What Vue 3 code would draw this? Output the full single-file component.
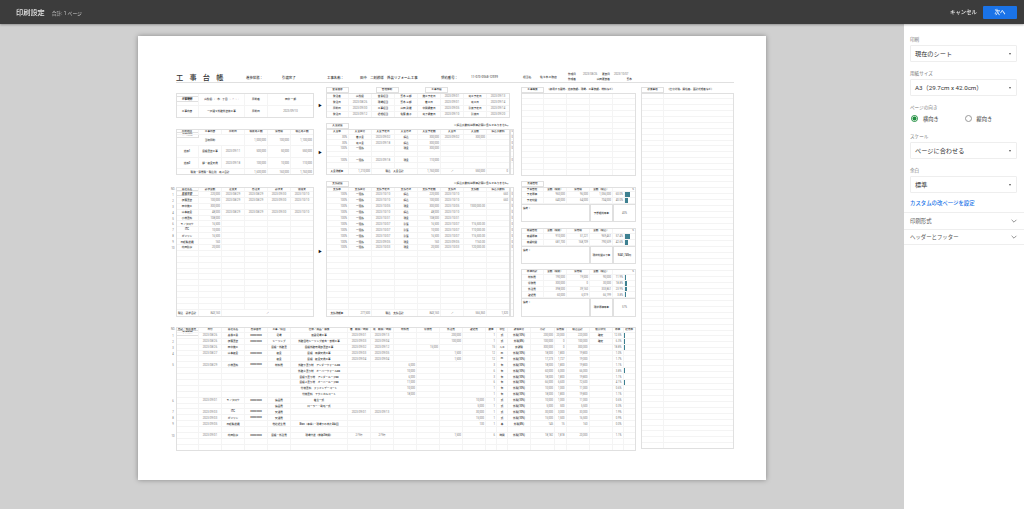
<template>
  <div class="app">
    <header class="topbar">
      <span class="top-title">印刷設定</span>
      <span class="top-count">合計: 1 ページ</span>
      <span class="top-cancel">キャンセル</span>
      <button class="top-next">次へ</button>
    </header>

    <div class="main">
      <div class="preview">
        <div class="sheet">
          <div class="sheet-head">
            <span class="doc-title">工事台帳</span>
            <span class="hd w-status">進捗状態：</span>
            <span class="hd w-done">引渡完了</span>
            <span class="hd w-name">工事名称：</span>
            <span class="hd w-site">田中　二刻模様　外装リフォーム工事</span>
            <span class="hd w-no">契約番号：</span>
            <span class="hd w-num">11-073-0568-12599</span>
            <span class="hd-sm w-owner">担当名</span>
            <span class="hd-sm w-shop">佐々木工務店</span>
            <div class="stamp">
              <span class="j">作成日</span><span>2023/08/26</span><span class="j">更新日</span><span>2023/10/07</span>
              <span class="j">作成者</span><span class="j e">山田</span><span class="j">更新者</span><span class="j e">鈴木</span>
            </div>
          </div>

          <div class="sheet-body">
            <div class="col-main">
              <div class="upper">
                <div class="sections">
                  <section v-for="s in sections" :key="s.id" class="section" :class="s.id">
                    <div class="tagrow">
                      <div class="tag-left"><span class="tag">{{ s.leftTag }}</span></div>
                      <div class="tag-right">
                        <span v-for="t in s.rightTags" :key="t" class="tag tag-gap">{{ t }}</span>
                        <span v-if="s.note" class="fee-note">※振込手数料は原価計算に含んでおりません。</span>
                      </div>
                    </div>
                    <div class="tblrow">
                      <template v-for="(p, i) in s.parts" :key="i">
                        <div v-if="p === 'arrow'" class="arrow">▶</div>
                        <div v-else class="tbl" :class="p.cls" :style="{ gridTemplateColumns: p.cols, gridTemplateRows: p.heights }">
                          <span v-for="(c, k) in p.cells" :key="k" class="cell" :class="c.cls" :style="c.span ? { gridColumn: 'span ' + c.span } : null">
                            <i v-if="c.bar" class="bar" :style="{ width: c.bar + '%' }"></i>
                            <template v-else>{{ c.t }}</template>
                          </span>
                        </div>
                      </template>
                    </div>
                  </section>
                </div>

                <div class="side">
                  <div class="tagline"><span class="tag">工事概要</span><span class="tag-note">（使用する建材、追加依頼、現場、工事依頼、材料など）</span></div>
                  <div class="tbl" :style="{ gridTemplateColumns: overview.cols, gridTemplateRows: overview.heights }">
                    <span v-for="(c, k) in overview.cells" :key="k" class="cell"></span>
                  </div>

                  <div v-for="p in panels" :key="p.id" class="panel" :class="p.id">
                    <div v-if="p.tag" class="tagline"><span class="tag">{{ p.tag }}</span></div>
                    <div class="tbl" :style="{ gridTemplateColumns: p.tbl.cols, gridTemplateRows: p.tbl.heights }">
                      <span v-for="(c, k) in p.tbl.cells" :key="k" class="cell" :class="c.cls" :style="c.span ? { gridColumn: 'span ' + c.span } : null">
                        <i v-if="c.bar" class="bar" :style="{ width: c.bar + '%' }"></i>
                        <template v-else>{{ c.t }}</template>
                      </span>
                    </div>
                  </div>
                </div>
              </div>

              <section class="section s4">
                <div class="tagrow">
                  <div class="tag-left"><span class="tag">原価明細</span></div>
                </div>
                <div class="tblrow">
                  <div class="tbl plain" :style="{ gridTemplateColumns: '6px', gridTemplateRows: detailHeights }">
                    <span v-for="(c, k) in detailNos.cells" :key="k" class="cell" :class="c.cls">{{ c.t }}</span>
                  </div>
                  <div class="tbl" :style="{ gridTemplateColumns: detail.cols, gridTemplateRows: detail.heights }">
                    <span v-for="(c, k) in detail.cells" :key="k" class="cell" :class="c.cls">
                      <i v-if="c.bar" class="bar" :style="{ width: c.bar + '%' }"></i>
                      <template v-else>{{ c.t }}</template>
                    </span>
                  </div>
                </div>
              </section>
            </div>

            <div class="col-notes">
              <div class="tagline"><span class="tag">必要事項</span><span class="tag-note">（仕分対策、開校者、面計処理者など）</span></div>
              <div class="tbl" :style="{ gridTemplateColumns: notes.cols, gridTemplateRows: notes.heights }">
                <span v-for="(c, k) in notes.cells" :key="k" class="cell"></span>
              </div>
            </div>
          </div>
        </div>
      </div>

      <aside class="panel-right">
        <div class="form">
          <template v-for="f in fieldsTop" :key="f.label">
            <label class="f-label">{{ f.label }}</label>
            <div class="select"><span>{{ f.value }}</span><i class="caret"></i></div>
          </template>

          <label class="f-label">ページの向き</label>
          <div class="radios">
            <span class="radio"><i class="dot on"></i>横向き</span>
            <span class="radio"><i class="dot"></i>縦向き</span>
          </div>

          <template v-for="f in fieldsBottom" :key="f.label">
            <label class="f-label">{{ f.label }}</label>
            <div class="select"><span>{{ f.value }}</span><i class="caret"></i></div>
          </template>

          <a class="custom-link">カスタムの改ページを設定</a>
        </div>

        <div v-for="a in accordions" :key="a" class="accordion">
          <span>{{ a }}</span>
          <svg width="8" height="8" viewBox="0 0 8 8"><path d="M1.6 2.8 4 5.2l2.4-2.4" fill="none" stroke="#777" stroke-width=".8" /></svg>
        </div>
      </aside>
    </div>
  </div>
</template>

<script setup>
const isNum = /^[¥\d,.%]+$/
const isDate = /^\d+\/\d+/

// 文字列セルをクラス付きのオブジェクトにする
const norm = (c) => {
  if (typeof c === 'object') {
    const base = c.t ? norm(c.t) : { cls: '' }
    return { ...base, ...c, cls: [base.cls, c.cls].filter(Boolean).join(' ') }
  }
  if (isNum.test(c)) return { t: c, cls: 'r' }
  if (isDate.test(c)) return { t: c, cls: 'd' }
  return { t: c, cls: 'j' }
}
const tbl = (cols, heights, rows, cls = '') => ({ cols, heights, cls, cells: rows.flat().map(norm) })
const blank = (n, k) => Array.from({ length: n }, () => Array(k).fill(''))

const c23x6 = 'repeat(6, 23px)'
const c23x8 = 'repeat(8, 23px)'

const s1 = {
  id: 's1',
  leftTag: '契約情報',
  rightTags: ['営業進捗', '管理体制', '工事日程'],
  parts: [
    tbl('23px 46px 23px 46px', 'repeat(2, 12.5px)', [
      ['工事場所', '山梨県○○市○丁目○○-○○', '契約者', '田中 一郎'],
      ['工事内容', '一戸建て外壁外装修工事', '契約日', '2023/09/10'],
    ], 'at-left'),
    'arrow',
    tbl(c23x8, 'repeat(4, 6.25px)', [
      ['発注者', '山梨県', '営業担当', '鈴木 三郎', '施工予定日', '2023/09/01', '完工予定日', '2023/09/13'],
      ['発注日', '2023/08/26', '現場担当', '鈴木 三郎', '着工日', '2023/09/01', '完工日', '2023/09/14'],
      ['契約日', '2023/09/30', '工事担当', '山田 武雄', '中間検査日', '2023/09/05', '引渡予定日', '2023/09/14'],
      ['発注日', '2023/09/12', '経理担当', '佐藤 典子', '完了検査日', '2023/09/10', '引渡日', '2023/09/20'],
    ]),
  ],
}

const s2 = {
  id: 's2',
  leftTag: '契約履歴',
  rightTags: ['入金履歴'],
  note: true,
  parts: [
    tbl(c23x6, '5.5px repeat(3, 11.5px) 6px', [
      ['契約項目', '工事内容', '契約日', '税抜売上額', '消費税', '税込売上額'],
      [{ t: '当初契約', span: 3 }, '1,000,000', '100,000', '1,100,000'],
      ['追加1', '屋根塗装工事', '2023/09/11', '500,000', '50,000', '550,000'],
      ['追加2', '樋・板金交換', '2023/09/18', '100,000', '10,000', '110,000'],
      [{ t: '税抜・消費税・税込別　売上合計', span: 3 }, '1,600,000', '160,000', '1,760,000'],
    ], 'at-left'),
    'arrow',
    tbl(c23x8, '5.5px repeat(6, 5.7px) 6.3px', [
      ['入金率', '入金区分', '入金予定日', '入金方法', '入金予定額', '入金日', '入金額', '振込手数料'],
      ['30%', '着手金', '2023/09/02', '振込', '300,000', '2023/09/02', '300,000', ''],
      ['30%', '完工金', '2023/09/18', '振込', '300,000', '', '', ''],
      ['100%', '一括払', '', '現金', '300,000', '', '', ''],
      ...blank(1, 8),
      ['100%', '一括払', '2023/09/18', '現金', '110,000', '', '', ''],
      ...blank(1, 8),
      ['入金残額▶', '1,210,000', { t: '税込　入金合計', span: 2 }, '1,760,000', '／', '550,000', '0'],
    ]),
    tbl('4px', '5.5px repeat(6, 5.7px) 6.3px', [['0'], ['0'], ['0'], ['0'], [''], ['0'], [''], ['']], 'extra'),
  ],
}

const payLeft = [
  ['高橋工業', '220,000', '2023/08/29', '2023/08/29', '2023/09/30', '2023/10/10'],
  ['伊藤塗装', '100,000', '2023/08/29', '2023/08/29', '2023/09/30', '2023/10/10'],
  ['田中施工', '300,000', '', '', '', ''],
  ['山本板金', '48,000', '2023/08/29', '2023/08/29', '2023/09/30', '2023/10/10'],
  ['小林塗料', '108,000', '', '', '', ''],
  ['モノタロウ', '16,500', '', '', '', ''],
  ['ITC', '10,000', '', '', '', ''],
  ['ガソリン', '16,500', '', '', '', ''],
  ['日軽輸送機', '160', '', '', '', ''],
  ['内田防水', '20,000', '', '', '', ''],
]
const payRight = [
  ['100%', '一括払', '2023/10/10', '振込', '220,000', '2023/10/10', '', '660'],
  ['100%', '一括払', '2023/10/10', '振込', '100,000', '2023/10/10', '', '660'],
  ['100%', '一括払', '2023/10/05', '現金', '300,000', '2023/10/05', '¥300,000.00', ''],
  ['100%', '一括払', '2023/10/10', '振込', '48,000', '2023/10/10', '', ''],
  ['100%', '一括払', '2023/10/31', '現金', '108,000', '2023/10/31', '', ''],
  ['100%', '一括払', '2023/10/07', '引落', '16,500', '2023/10/07', '¥16,500.00', ''],
  ['100%', '一括払', '2023/10/07', '引落', '10,000', '2023/10/07', '¥10,000.00', ''],
  ['100%', '一括払', '2023/10/07', '引落', '16,500', '2023/10/07', '¥16,500.00', ''],
  ['100%', '一括払', '2023/09/05', '現金', '160', '2023/09/05', '¥160.00', ''],
  ['100%', '一括払', '2023/10/03', '現金', '20,000', '2023/10/03', '¥20,000.00', ''],
]
const h3 = '5px repeat(20, 5.9px) 7px'

const s3 = {
  id: 's3',
  leftTag: '請求履歴',
  rightTags: ['支払履歴'],
  note: true,
  parts: [
    tbl('6px', h3, [['NO.'], ...Array.from({ length: 10 }, (_, i) => [{ t: String(i + 1), cls: 'ct' }]), ...blank(11, 1)], 'plain'),
    tbl(c23x6, h3, [
      ['業社先名', '請求金額', '注文書', '受注書', '請求書', '領収書'],
      ...payLeft,
      ...blank(10, 6),
      ['税込　請求合計', '843,160', { t: '／', span: 4, cls: 'ct' }],
    ]),
    'arrow',
    tbl(c23x8, h3, [
      ['支払率', '支払区分', '支払予定日', '支払方法', '支払予定額', '支払日', '支払額', '振込手数料'],
      ...payRight,
      ...blank(10, 8),
      ['支払残額▶', '277,500', { t: '税込　支払合計', span: 2 }, '843,160', '／', '566,360', '1,320'],
    ]),
    tbl('4px', h3, [[''], ...Array(10).fill(['0']), ...blank(11, 1)], 'extra'),
  ],
}

const sections = [s1, s2, s3]

const overview = tbl('repeat(5, 23px)', 'repeat(14, 5.93px)', blank(14, 5))
const notes = tbl('23px 70px', 'repeat(60, 5.95px)', blank(60, 2))

const pCols = 'repeat(4, 23px) 12px 11px'
const panels = [
  {
    id: 'p1',
    tag: '見積管理',
    tbl: tbl(pCols, '5px 6px 6px 18px', [
      ['予算管理', '金額（税抜）', '消費税', '金額（税込）', { t: '%', span: 2 }],
      ['予定原価', '960,000', '96,000', '1,056,000', '60.0%', { bar: 60 }],
      ['予定利益', '640,000', '64,000', '704,000', '40.0%', { bar: 40 }],
      [{ t: '備考：', span: 3, cls: 'top rule' }, { t: '予想粗利率▶', cls: 'rule' }, { t: '40%', span: 2, cls: 'ct rule' }],
    ]),
  },
  {
    id: 'p2',
    tbl: tbl(pCols, '6px 6px 6px 18px', [
      ['実績管理', '金額（税抜）', '消費税', '金額（税込）', { t: '%', span: 2 }],
      ['実績原価', '910,000', '51,221', '969,461', '57.4%', { bar: 57 }],
      ['実績利益', '681,700', '168,709', '790,539', '42.6%', { bar: 43 }],
      [{ t: '備考：', span: 3, cls: 'top rule' }, { t: '現状利益以下▶', cls: 'rule' }, { t: '¥441,740円', span: 2, cls: 'ct rule' }],
    ]),
  },
  {
    id: 'p3',
    tbl: tbl(pCols, '6px repeat(4, 5.8px) 18.8px', [
      ['原価内訳', '金額（税抜）', '消費税', '金額（税込）', { t: '%', span: 2 }],
      ['材料費', '190,000', '19,000', '90,000', '11.9%', { bar: 12 }],
      ['労務費', '300,000', '0', '30,000', '18.8%', { bar: 19 }],
      ['外注費', '398,000', '39,160', '333,861', '23.9%', { bar: 24 }],
      ['諸経費', '60,000', '6,019', '66,199', '3.8%', { bar: 4 }],
      [{ t: '備考：', span: 3, cls: 'top rule' }, { t: '現状原価率▶', cls: 'rule' }, { t: '57%', span: 2, cls: 'ct rule' }],
    ]),
  },
]

const X = 'xxxxxxxxx'
const T10 = '外税(10%)'
const dLine = (head, dates, costs, tail) => [...head, ...dates, ...costs, ...tail]
const detailRows = [
  dLine(['', '2023/08/26', '高橋工業', X, '足場', '仮設足場工事'], ['2023/09/01', '2023/09/13'], ['', '', '200,000', ''], ['1', '式', T10, '200,000', '20,000', '220,000', '確定', '12.5%', { bar: 12 }]),
  dLine(['', '2023/08/26', '伊藤塗装', X, 'シーリング', '外壁目地シーリング撤去・新規工事'], ['2023/09/03', '2023/09/04'], ['', '', '100,000', ''], ['1', '式', '外税(8%)', '100,000', '0', '100,000', '確定', '6.3%', { bar: 6 }]),
  dLine(['', '2023/08/26', '田中施工', '', '屋根・外壁塗', '屋根外壁充填部塗装工事'], ['2023/09/02', '2023/09/12'], ['', '15,000', '', ''], ['15', '人工', '非課税', '300,000', '0', '300,000', '', '18.8%', { bar: 19 }]),
  dLine(['', '2023/08/27', '山本板金', X, '板金', '屋根　雨樋交換工事'], ['2023/09/03', '2023/09/05'], ['', '', '1,500', ''], ['12', 'm', T10, '18,000', '1,800', '19,800', '', '1.0%', '']),
  dLine(['', '', '', '', '板金', '屋根　板金交換工事'], ['2023/09/04', '2023/09/04'], ['', '', '1,500', ''], ['12', 'm', T10, '17,273', '1,727', '19,000', '', '1.7%', '']),
  dLine(['', '2023/08/29', '小林塗料', X, '材料費', '外壁下塗り材　アンダーウォールαα'], ['', ''], ['6,000', '', '', ''], ['3', '缶', T10, '18,000', '1,800', '19,800', '', '1.1%', '']),
  dLine(['', '', '', '', '', '外壁上塗り材　オーバーウォールαα'], ['', ''], ['10,000', '', '', ''], ['6', '缶', T10, '60,000', '6,000', '66,000', '', '3.8%', { bar: 4 }]),
  dLine(['', '', '', '', '', '屋根下塗り材　アンダールーフαα'], ['', ''], ['6,000', '', '', ''], ['3', '缶', T10, '18,000', '1,800', '19,800', '', '1.1%', '']),
  dLine(['', '', '', '', '', '屋根上塗り材　オーバールーフαα'], ['', ''], ['11,000', '', '', ''], ['6', '缶', T10, '66,000', '6,600', '72,600', '', '4.1%', { bar: 4 }]),
  dLine(['', '', '', '', '', '付帯塗料　ファインデーコート'], ['', ''], ['10,000', '', '', ''], ['1', '缶', T10, '10,000', '1,000', '11,000', '', '0.6%', '']),
  dLine(['', '', '', '', '', '付帯塗料　テクニカルコート'], ['', ''], ['18,000', '', '', ''], ['1', '缶', T10, '18,000', '1,800', '19,800', '', '1.1%', '']),
  dLine(['', '2023/09/01', 'モノタロウ', X, '備品費', '養生一式'], ['', ''], ['', '', '', '10,000'], ['1', '式', T10, '10,000', '1,000', '11,000', '', '0.6%', '']),
  dLine(['', '', '', '', '備品費', 'ローラー・刷毛一式'], ['', ''], ['', '', '', '5,000'], ['1', '式', T10, '5,000', '500', '5,500', '', '0.3%', '']),
  dLine(['', '2023/09/03', 'ITC', X, '交通費', ''], ['2023/09/01', '2023/09/13'], ['', '', '', '30,000'], ['1', '式', T10, '30,000', '3,000', '33,000', '', '1.9%', '']),
  dLine(['', '2023/09/03', 'ガソリン', X, '交通費', ''], ['', ''], ['', '', '', '15,000'], ['1', '式', T10, '15,000', '1,500', '16,500', '', '0.9%', '']),
  dLine(['', '2023/09/05', '日軽輸送機', '', '他社経生費', '8ton（車種）・現場下の木片4種回'], ['', ''], ['', '', '', '130'], ['1', '本', '外税(8%)', '145', '15', '160', '', '0.0%', '']),
  ...blank(1, 21),
  dLine(['', '2023/09/01', '内田防水', X, '屋根・外注費', '現場代送（休憩2時間）'], ['2/9時', '2/9時'], ['', '', '1,500', ''], ['6', '時間', T10, '18,182', '1,818', '20,000', '', '1.1%', '']),
  ...blank(2, 21),
]

const detailHeader = ['受託／取置番号', '日付', '業社先名', '受験番号', '工事／科目', '仕様／商品・摘要', '着　期間／時間', '完　期間／時間', '材料費', '労務費', '外注費', '諸経費', '数量', '単位', '課税区分', '小計', '消費税', '税込合計', '取引状況', '原価', '経費率']

const detailHeights = '6px repeat(20, 5.9px)'
const detail = tbl('repeat(5, 23px) 57px repeat(6, 23px) 11px 11px 23px 24px 11.5px 23px 23px 11px 12.5px', detailHeights, [detailHeader, ...detailRows])

const noLabels = ['1', '2', '3', '4', '', '5', '', '', '', '', '', '6', '', '7', '8', '9', '', '10', '', '']
const detailNos = tbl('6px', detailHeights, [['NO.'], ...noLabels.map((n) => [{ t: n, cls: 'ct' }])])

const fieldsTop = [
  { label: '印刷', value: '現在のシート' },
  { label: '用紙サイズ', value: 'A3（29.7cm x 42.0cm）' },
]
const fieldsBottom = [
  { label: 'スケール', value: 'ページに合わせる' },
  { label: '余白', value: '標準' },
]
const accordions = ['印刷形式', 'ヘッダーとフッター']
</script>

<style scoped>
.app {
  width: 1024px;
  height: 509px;
  display: flex;
  flex-direction: column;
  overflow: hidden;
  font-family: Roboto, "Noto Sans CJK JP", sans-serif;
  filter: blur(.4px);
}
.topbar {
  height: 24px;
  flex: none;
  background: #3c3c3c;
  display: flex;
  align-items: center;
  padding: 0 7px 0 16px;
  color: #e4e4e4;
  box-shadow: 0 1px 2px rgba(0, 0, 0, .3);
  z-index: 1;
}
.top-title { font-size: 7.2px; font-weight: 500; }
.top-count { font-size: 4.8px; margin-left: 7px; color: #d0d0d0; }
.top-cancel { margin-left: auto; font-size: 5.4px; font-weight: 500; color: #e8e8e8; }
.top-next {
  width: 34px;
  height: 13px;
  margin-left: 6px;
  border: 0;
  border-radius: 1px;
  background: #1a73e8;
  color: #fff;
  font-family: inherit;
  font-size: 5.4px;
  font-weight: 500;
  padding: 0;
}
.main { flex: 1; display: flex; min-height: 0; }
.preview {
  flex: 1;
  background: #d0d0d0;
  display: flex;
  justify-content: center;
  padding-top: 12px;
}
.sheet {
  width: 628px;
  height: 444px;
  box-sizing: border-box;
  background: #fff;
  box-shadow: 0 0 5px rgba(0, 0, 0, .35);
  padding: 36px 32px 0;
  color: #333;
}
.sheet-head {
  height: 10px;
  margin-left: 6px;
  border-bottom: 1px solid #e0e0e0;
  display: flex;
  align-items: center;
  font-size: 3.4px;
  white-space: nowrap;
}
.doc-title { width: 70px; font-size: 7.2px; letter-spacing: 6.2px; font-weight: 500; }
.hd { font-weight: 500; }
.hd-sm { font-size: 2.8px; font-weight: 500; }
.w-status { width: 36px; }
.w-done { width: 45px; }
.w-name { width: 33px; }
.w-site { width: 81px; }
.w-no { width: 30px; }
.w-num { width: 52px; font-size: 3px; color: #666; }
.w-owner { width: 17px; }
.w-shop { width: 28px; }
.stamp {
  width: 68px;
  display: grid;
  grid-template-columns: 15px 19px 12px 18px;
  font-size: 2.7px;
  line-height: 5px;
  color: #777;
}
.stamp .j { color: #333; font-weight: 500; }
.stamp .e { text-align: right; }

.sheet-body { display: flex; gap: 5px; }
.col-main { width: 466px; }
.upper { display: flex; gap: 7px; }
.sections { width: 344px; }
.side { width: 115px; }
.col-notes { width: 93px; margin-top: 5px; }

.section.s1 { margin-top: 4px; }
.section.s2 { margin-top: 5px; }
.section.s3 { margin-top: 6px; }
.section.s4 { margin-top: 4px; }
.tagrow { height: 6px; display: flex; }
.tag-left { width: 144px; padding-left: 6px; box-sizing: border-box; }
.tag-right { margin-left: 12px; width: 184px; display: flex; align-items: flex-start; }
.tag-gap { margin-right: 26.5px; }
.tag {
  display: inline-block;
  flex: none;
  width: 23px;
  height: 6px;
  box-sizing: border-box;
  border: 1px solid #e0e0e0;
  font-size: 2.6px;
  line-height: 4px;
  text-align: center;
  font-weight: 500;
  white-space: nowrap;
  overflow: hidden;
}
.fee-note {
  margin-left: auto;
  font-size: 2.7px;
  line-height: 5px;
  white-space: nowrap;
  font-weight: 500;
}
.tblrow { display: flex; }
.arrow {
  width: 12px;
  flex: none;
  display: flex;
  align-items: center;
  justify-content: center;
  font-size: 3.6px;
  color: #111;
}
.at-left { margin-left: 6px; }
.tbl {
  display: grid;
  flex: none;
  outline: 1px solid #e0e0e0;
  outline-offset: -1px;
}
.tbl.plain { outline: 0; }
.cell {
  display: flex;
  align-items: center;
  justify-content: center;
  box-sizing: border-box;
  border-right: 1px solid #f4f4f4;
  border-bottom: 1px solid #f4f4f4;
  font-size: 2.6px;
  white-space: nowrap;
  overflow: hidden;
  padding: 0 1px;
}
.extra .cell { padding: 0; font-size: 2px; }
.cell.j { color: #333; font-weight: 500; }
.cell.r { justify-content: flex-end; color: #777; font-size: 2.7px; }
.cell.d { color: #777; font-size: 2.7px; }
.cell.ct { justify-content: center; }
.cell.top { justify-content: flex-start; align-items: flex-start; padding-top: 1px; }
.cell.rule { border: 1px solid #e0e0e0; }
.plain .cell { border: 0; padding: 0; }
.plain .cell.j, .plain .cell.r { color: #777; font-weight: 400; justify-content: center; }
.bar {
  display: block;
  height: 100%;
  background: #3d8091;
  margin-right: auto;
  margin-left: -1px;
}

.tagline { height: 6px; display: flex; align-items: flex-start; margin-top: -1px; }
.tag-note { font-size: 2.6px; line-height: 5px; margin-left: 3px; white-space: nowrap; font-weight: 500; }
.side > .tagline { margin-top: 4px; }
.panel.p1 { margin-top: 6px; }
.panel.p2 { margin-top: 6px; }
.panel.p3 { margin-top: 5px; }

.panel-right {
  width: 120px;
  flex: none;
  background: #fff;
  color: #333;
}
.form { padding: 12px 7px 0 6px; }
.f-label { display: block; font-size: 4.6px; color: #777; line-height: 7px; margin-bottom: 2px; }
.select {
  height: 17px;
  box-sizing: border-box;
  border: 1px solid #eee;
  border-radius: 1px;
  display: flex;
  align-items: center;
  justify-content: space-between;
  padding: 0 5px 0 4px;
  font-size: 6.2px;
  margin-bottom: 8px;
}
.caret {
  width: 0;
  height: 0;
  border: 1.5px solid transparent;
  border-top: 2px solid #555;
  border-bottom: 0;
}
.radios { display: flex; height: 11px; margin: 1px 0 9px; align-items: center; }
.radio { width: 54px; display: flex; align-items: center; font-size: 5.2px; padding-left: 1px; }
.dot {
  width: 7px;
  height: 7px;
  box-sizing: border-box;
  border: 1px solid #999;
  border-radius: 50%;
  margin-right: 5px;
}
.dot.on { border-color: #1e8e3e; background: radial-gradient(circle, #1e8e3e 0 1.8px, #fff 2.2px); }
.custom-link {
  display: block;
  color: #1a73e8;
  font-size: 5.4px;
  font-weight: 500;
  line-height: 8px;
  margin-top: -2px;
  margin-bottom: 5px;
  white-space: nowrap;
}
.accordion {
  height: 16.5px;
  box-sizing: border-box;
  border-top: 1px solid #eee;
  display: flex;
  align-items: center;
  justify-content: space-between;
  padding: 0 6px;
  font-size: 5.4px;
  color: #555;
}
.accordion:last-child { border-bottom: 1px solid #eee; }
</style>

<style>
html, body { background: #d0d0d0; overflow: hidden; }
</style>
